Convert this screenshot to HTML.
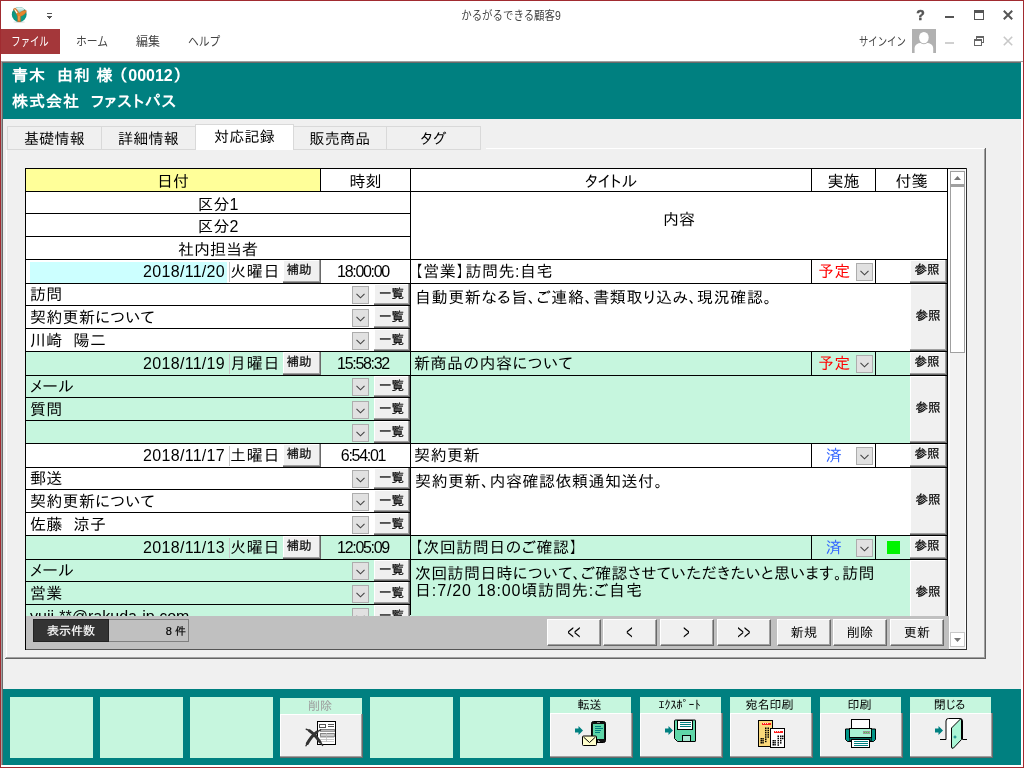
<!DOCTYPE html>
<html lang="ja"><head><meta charset="utf-8"><title>かるがるできる顧客9</title>
<style>
*{box-sizing:border-box}
html,body{margin:0;padding:0}
body{width:1024px;height:768px;position:relative;overflow:hidden;background:#f0f0f0;will-change:transform;
 font-family:"Liberation Sans","IPAPGothic","IPAGothic",sans-serif;font-size:16px;color:#000}
.abs,.abs>*{position:absolute}
.ui{font-family:"Liberation Sans","Noto Sans CJK JP",sans-serif}
.g{font-family:"Liberation Sans","IPAPGothic","IPAGothic",sans-serif}
.m{font-family:"Liberation Mono","IPAGothic",monospace}
#frame{left:0;top:0;width:1024px;height:768px;border:1px solid #a12b30;z-index:50;pointer-events:none}
#titlebar{left:1px;top:1px;width:1022px;height:60px;background:#fff}
#filetab{left:1px;top:29px;width:59px;height:25px;background:#a4373a;color:#fff;font-size:12px;line-height:27px;text-align:center}
#filetab span{display:inline-block;transform:scaleX(.78)}
.menu{top:30px;height:25px;line-height:25px;font-size:12px;color:#444;white-space:pre;transform-origin:0 50%;transform:scaleX(.9)}
#title{left:0;top:6px;width:1022px;text-align:center;font-size:12px;line-height:20px;color:#444;transform:scaleX(.87)}
#hl1{left:1px;top:61px;width:1022px;height:1px;background:#a0a0a0}
#hl2{left:1px;top:62px;width:1022px;height:1px;background:#6a6a6a}
#vl1{left:1px;top:62px;width:1px;height:704px;background:#a0a0a0}
#vl2{left:2px;top:62px;width:1px;height:704px;background:#696969}
#head{left:3px;top:63px;width:1018px;height:56px;background:#008080;color:#fff;font-size:16px}
#head div{left:9px;white-space:pre;line-height:20px;font-weight:bold;letter-spacing:1px}
.sp{display:inline-block;width:11px}
.tab{top:126px;height:24px;border:1px solid #d9d9d9;background:#f0f0f0;text-align:center;font-size:15px;line-height:23px;letter-spacing:.3px}
.tab.act{top:124px;height:26px;background:#fff;border-bottom:none;line-height:23px}
#pnl-top{left:486px;top:148px;width:498px;height:1px;background:#fff}
#pnl-r1{left:984px;top:149px;width:1px;height:509px;background:#a0a0a0}
#pnl-r2{left:985px;top:148px;width:1px;height:511px;background:#646464}
#pnl-b1{left:6px;top:657px;width:979px;height:1px;background:#a0a0a0}
#pnl-b2{left:5px;top:658px;width:981px;height:1px;background:#646464}
#pnl-l{left:6px;top:150px;width:1px;height:507px;background:#fff}
/* table */
#tbl{left:25px;top:168px;width:942px;height:482px;background:#fff;overflow:hidden}
.hl{height:1px;background:#000}
.vl{width:1px;background:#000}
.hc{text-align:center;font-size:16px;line-height:22px}
.rec{left:0;width:923px;height:92px}
.rec.gr{background:#c6f6de}
.rec>*{position:absolute}
.t{white-space:pre;line-height:22px;font-size:16px;letter-spacing:.3px}
.btn{background:#f0f0f0;border-right:1px solid #696969;border-bottom:1px solid #696969;box-shadow:inset -1px -1px 0 #a0a0a0, inset 1px 1px 0 #fff;text-align:center}
.sb{font-size:12.5px;-webkit-text-stroke:.2px #000}
.dd{width:17px;height:18px;background:#e1e1e1;border:1px solid #adadad}
.dd svg{position:absolute;left:3px;top:6px}
#foot{left:1px;top:448px;width:923px;height:34px;background:#c0c0c0;z-index:3}
.nb{top:3px;width:54px;height:27px;background:#f0f0f0;border:1px solid #fff;border-right-color:#696969;border-bottom-color:#696969;box-shadow:inset -1px -1px 0 #a0a0a0;text-align:center;font-size:13px;line-height:25px;letter-spacing:.3px}
/* bottom bar */
#bar{left:3px;top:689px;width:1018px;height:76px;background:#008080}
.cell{top:8px;width:83px;height:61px;background:#c6f6de}
.cell .lb{left:0;top:0;width:81px;height:16px;background:#c6f6de;text-align:center;font-size:12px;line-height:16px;padding-right:2px}
.cell .bb{left:0;top:16px;width:83px;height:45px;background:#f0f0f0;border-right:1px solid #696969;border-bottom:1px solid #696969;box-shadow:inset -1px -1px 0 #a0a0a0, inset 1px 1px 0 #fff}
.cell.has{background:transparent}
</style></head>
<body class="abs">
<div id="titlebar"></div>
<div id="title" class="ui">かるがるできる顧客9</div>
<svg style="left:11px;top:6px" width="17" height="17" viewBox="0 0 17 17"><defs><radialGradient id="gi" cx="50%" cy="60%" r="60%"><stop offset="0" stop-color="#12a890"/><stop offset="1" stop-color="#0a8c7a"/></radialGradient><linearGradient id="gh" x1="0" y1="0" x2="0" y2="1"><stop offset="0" stop-color="#ffffff"/><stop offset="1" stop-color="#4fb8ac"/></linearGradient></defs><ellipse cx="8.2" cy="16" rx="6" ry=".7" fill="#ddd"/><circle cx="8.2" cy="8.5" r="7.4" fill="url(#gi)"/><path d="M3.6 2.6 Q8.2 -0.3 12.8 2.6 L13.5 4 L8 8 Z" fill="url(#gh)"/><path d="M2.3 3 L4.3 2 C6 3.6 7.4 5.6 8.1 7.4 C9.6 5.6 12.2 4.4 15.1 4.2 L15.3 5.8 C14.2 8.2 11.6 9.8 9.7 10.3 L9.5 15.7 L6.7 15.7 L6.5 10.2 C5.8 8 3.8 5.2 2.3 3 Z" fill="#e8842c" stroke="#b4601c" stroke-width=".4"/><path d="M3.2 3.6 L5.6 7.4 L6.6 6.6 L4.2 3.4 Z" fill="#fff"/><path d="M7.6 10 L8.4 10 L8.3 14 L7.5 14 Z" fill="#f6b070"/></svg>
<svg style="left:47px;top:13px" width="5" height="6" viewBox="0 0 5 6" shape-rendering="crispEdges"><path d="M0 0 H5 V1 H0 Z M0 3 H5 V4 H4 V5 H3 V6 H2 V5 H1 V4 H0 Z" fill="#555"/></svg>
<div class="ui" style="left:915px;top:6px;width:11px;font-size:14px;font-weight:bold;color:#555;-webkit-text-stroke:.5px #555;line-height:18px;text-align:center">?</div>
<div style="left:945px;top:16px;width:9px;height:2px;background:#555"></div>
<div style="left:974px;top:10px;width:10px;height:10px;border:1px solid #555;border-top-width:3px"></div>
<svg style="left:1003px;top:10px" width="10" height="10" viewBox="0 0 10 10"><path d="M0.8 0.8 L9.2 9.2 M9.2 0.8 L0.8 9.2" stroke="#555" stroke-width="2"/></svg>
<div id="filetab" class="ui"><span>ファイル</span></div>
<div class="menu ui" style="left:76px">ホーム</div>
<div class="menu ui" style="left:136px;transform:none">編集</div>
<div class="menu ui" style="left:188px">ヘルプ</div>
<div class="menu ui" style="left:859px;transform:scaleX(.78)">サインイン</div>
<svg style="left:912px;top:29px" width="24" height="24" viewBox="0 0 24 24"><rect width="24" height="24" fill="#b1b1b1"/><path d="M2.6 24 V19.500 C2.600 15 6.500 13.800 11.900 13.800 C17.300 13.800 21.200 15 21.200 19.500 V24 Z" fill="#fff"/><ellipse cx="11.900" cy="8.600" rx="5.700" ry="6.600" fill="#b1b1b1"/><ellipse cx="11.900" cy="8.600" rx="4.800" ry="5.700" fill="#fff"/></svg>
<div style="left:945px;top:42px;width:9px;height:2px;background:#d0d0d0"></div>
<svg style="left:974px;top:36px" width="10" height="10" viewBox="0 0 10 10" shape-rendering="crispEdges"><path d="M2 0 H10 V7 H8 V6 H9 V2 H3 V3 H2 Z" fill="#666"/><path d="M0 3 H8 V10 H0 Z M1 5 V9 H7 V5 Z" fill="#666" fill-rule="evenodd"/></svg>
<svg style="left:1003px;top:36px" width="10" height="10" viewBox="0 0 10 10"><path d="M0.8 0.8 L9.2 9.2 M9.2 0.8 L0.8 9.2" stroke="#c8c8c8" stroke-width="1.6"/></svg>
<div id="hl1"></div><div id="hl2"></div><div id="vl1"></div><div id="vl2"></div>
<div id="head" class="abs g"><div style="top:3px">青木<span class="sp"></span>由利 様<span class="sp" style="width:5px"></span>（<span style="letter-spacing:0">00012</span><span style="display:inline-block;width:1px"></span>）</div><div style="top:29px">株式会社<span class="sp"></span>ファストパス</div></div>
<div class="tab" style="left:7px;width:95px">基礎情報</div>
<div class="tab" style="left:101px;width:95px">詳細情報</div>
<div class="tab act" style="left:195px;width:99px">対応記録</div>
<div class="tab" style="left:293px;width:94px">販売商品</div>
<div class="tab" style="left:386px;width:95px">タグ</div>
<div id="pnl-top"></div><div id="pnl-r1"></div><div id="pnl-r2"></div><div id="pnl-b1"></div><div id="pnl-b2"></div><div id="pnl-l"></div>
<div id="tbl" class="abs">
<div style="left:1px;top:1px;width:295px;height:22px;background:#ffff99"></div>
<div class="hc" style="left:1px;top:3px;width:294px">日付</div>
<div class="hc" style="left:296px;top:3px;width:89px">時刻</div>
<div class="hc" style="left:1px;top:26px;width:384px">区分1</div>
<div class="hc" style="left:1px;top:48px;width:384px">区分2</div>
<div class="hc" style="left:1px;top:71px;width:384px">社内担当者</div>
<div class="hc" style="left:386px;top:3px;width:400px">タイトル</div>
<div class="hc" style="left:787px;top:3px;width:63px">実施</div>
<div class="hc" style="left:851px;top:3px;width:71px">付箋</div>
<div class="hc" style="left:386px;top:41px;width:536px">内容</div>
<div class="rec" style="top:91px">
<div style="left:5px;top:3px;width:197px;height:21px;background:#ccffff"></div>
<div class="t" style="left:5px;top:2px;width:195px;text-align:right">2018/11/20</div>
<div style="left:204px;top:3px;width:1px;height:20px;background:#c8c8c8"></div>
<div class="t" style="left:205px;top:2px;letter-spacing:.8px">火曜日</div>
<div class="btn sb" style="left:258px;top:1px;width:38px;height:23px;line-height:21px;padding-right:5px">補助</div>
<div class="t" style="left:296px;top:2px;width:84px;text-align:center;letter-spacing:-1.3px">18:00:00</div>
<div class="t" style="left:389px;top:2px;letter-spacing:.5px">【営業】訪問先:自宅</div>
<div class="t" style="left:793px;top:2px;color:#ff0000;width:32px;text-align:center">予定</div>
<div class="dd" style="left:831px;top:4px"><svg width="9" height="6" viewBox="0 0 9 6"><path d="M0.5 0.8 L4.5 4.8 L8.5 0.8" fill="none" stroke="#444" stroke-width="1.1"/></svg></div>
<div class="btn sb" style="left:885px;top:1px;width:37px;height:23px;line-height:21px;padding-right:2px">参照</div>
<div class="t" style="left:5px;top:25px">訪問</div>
<div class="dd" style="left:327px;top:27px"><svg width="9" height="6" viewBox="0 0 9 6"><path d="M0.5 0.8 L4.5 4.8 L8.5 0.8" fill="none" stroke="#444" stroke-width="1.1"/></svg></div>
<div class="btn sb" style="left:349px;top:25px;width:36px;height:21px;line-height:21px">一覧</div>
<div class="t" style="left:5px;top:48px">契約更新について</div>
<div class="dd" style="left:327px;top:50px"><svg width="9" height="6" viewBox="0 0 9 6"><path d="M0.5 0.8 L4.5 4.8 L8.5 0.8" fill="none" stroke="#444" stroke-width="1.1"/></svg></div>
<div class="btn sb" style="left:349px;top:47px;width:36px;height:22px;line-height:22px">一覧</div>
<div class="t" style="left:5px;top:71px">川崎<span class="sp"></span>陽二</div>
<div class="dd" style="left:327px;top:73px"><svg width="9" height="6" viewBox="0 0 9 6"><path d="M0.5 0.8 L4.5 4.8 L8.5 0.8" fill="none" stroke="#444" stroke-width="1.1"/></svg></div>
<div class="btn sb" style="left:349px;top:70px;width:36px;height:22px;line-height:22px">一覧</div>
<div class="t" style="left:390px;top:30px;width:480px;white-space:normal;line-height:17px;letter-spacing:0.62px">自動更新なる旨、ご連絡、書類取り込み、現況確認。</div>
<div class="btn sb" style="left:885px;top:25px;width:37px;height:67px;line-height:64px">参照</div>
<div class="hl" style="left:0;top:0;width:923px"></div>
<div class="hl" style="left:0;top:24px;width:923px"></div>
<div class="hl" style="left:0;top:46px;width:386px"></div>
<div class="hl" style="left:0;top:69px;width:386px"></div>
<div class="vl" style="left:786px;top:0;height:24px"></div>
<div class="vl" style="left:850px;top:0;height:24px"></div>
</div>
<div class="rec gr" style="top:183px">
<div class="t" style="left:5px;top:2px;width:195px;text-align:right">2018/11/19</div>
<div style="left:204px;top:3px;width:1px;height:20px;background:#c8c8c8"></div>
<div class="t" style="left:205px;top:2px;letter-spacing:.8px">月曜日</div>
<div class="btn sb" style="left:258px;top:1px;width:38px;height:23px;line-height:21px;padding-right:5px">補助</div>
<div class="t" style="left:296px;top:2px;width:84px;text-align:center;letter-spacing:-1.3px">15:58:32</div>
<div class="t" style="left:389px;top:2px;letter-spacing:.5px">新商品の内容について</div>
<div class="t" style="left:793px;top:2px;color:#ff0000;width:32px;text-align:center">予定</div>
<div class="dd" style="left:831px;top:4px"><svg width="9" height="6" viewBox="0 0 9 6"><path d="M0.5 0.8 L4.5 4.8 L8.5 0.8" fill="none" stroke="#444" stroke-width="1.1"/></svg></div>
<div class="btn sb" style="left:885px;top:1px;width:37px;height:23px;line-height:21px;padding-right:2px">参照</div>
<div class="t" style="left:5px;top:25px">メール</div>
<div class="dd" style="left:327px;top:27px"><svg width="9" height="6" viewBox="0 0 9 6"><path d="M0.5 0.8 L4.5 4.8 L8.5 0.8" fill="none" stroke="#444" stroke-width="1.1"/></svg></div>
<div class="btn sb" style="left:349px;top:25px;width:36px;height:21px;line-height:21px">一覧</div>
<div class="t" style="left:5px;top:48px">質問</div>
<div class="dd" style="left:327px;top:50px"><svg width="9" height="6" viewBox="0 0 9 6"><path d="M0.5 0.8 L4.5 4.8 L8.5 0.8" fill="none" stroke="#444" stroke-width="1.1"/></svg></div>
<div class="btn sb" style="left:349px;top:47px;width:36px;height:22px;line-height:22px">一覧</div>
<div class="t" style="left:5px;top:71px"></div>
<div class="dd" style="left:327px;top:73px"><svg width="9" height="6" viewBox="0 0 9 6"><path d="M0.5 0.8 L4.5 4.8 L8.5 0.8" fill="none" stroke="#444" stroke-width="1.1"/></svg></div>
<div class="btn sb" style="left:349px;top:70px;width:36px;height:22px;line-height:22px">一覧</div>
<div class="t" style="left:390px;top:30px;width:480px;white-space:normal;line-height:17px;letter-spacing:0.3px"></div>
<div class="btn sb" style="left:885px;top:25px;width:37px;height:67px;line-height:64px">参照</div>
<div class="hl" style="left:0;top:0;width:923px"></div>
<div class="hl" style="left:0;top:24px;width:923px"></div>
<div class="hl" style="left:0;top:46px;width:386px"></div>
<div class="hl" style="left:0;top:69px;width:386px"></div>
<div class="vl" style="left:786px;top:0;height:24px"></div>
<div class="vl" style="left:850px;top:0;height:24px"></div>
</div>
<div class="rec" style="top:275px">
<div class="t" style="left:5px;top:2px;width:195px;text-align:right">2018/11/17</div>
<div style="left:204px;top:3px;width:1px;height:20px;background:#c8c8c8"></div>
<div class="t" style="left:205px;top:2px;letter-spacing:.8px">土曜日</div>
<div class="btn sb" style="left:258px;top:1px;width:38px;height:23px;line-height:21px;padding-right:5px">補助</div>
<div class="t" style="left:296px;top:2px;width:84px;text-align:center;letter-spacing:-1.3px">6:54:01</div>
<div class="t" style="left:389px;top:2px;letter-spacing:.5px">契約更新</div>
<div class="t" style="left:793px;top:2px;color:#3366ff;width:32px;text-align:center">済</div>
<div class="dd" style="left:831px;top:4px"><svg width="9" height="6" viewBox="0 0 9 6"><path d="M0.5 0.8 L4.5 4.8 L8.5 0.8" fill="none" stroke="#444" stroke-width="1.1"/></svg></div>
<div class="btn sb" style="left:885px;top:1px;width:37px;height:23px;line-height:21px;padding-right:2px">参照</div>
<div class="t" style="left:5px;top:25px">郵送</div>
<div class="dd" style="left:327px;top:27px"><svg width="9" height="6" viewBox="0 0 9 6"><path d="M0.5 0.8 L4.5 4.8 L8.5 0.8" fill="none" stroke="#444" stroke-width="1.1"/></svg></div>
<div class="btn sb" style="left:349px;top:25px;width:36px;height:21px;line-height:21px">一覧</div>
<div class="t" style="left:5px;top:48px">契約更新について</div>
<div class="dd" style="left:327px;top:50px"><svg width="9" height="6" viewBox="0 0 9 6"><path d="M0.5 0.8 L4.5 4.8 L8.5 0.8" fill="none" stroke="#444" stroke-width="1.1"/></svg></div>
<div class="btn sb" style="left:349px;top:47px;width:36px;height:22px;line-height:22px">一覧</div>
<div class="t" style="left:5px;top:71px">佐藤<span class="sp"></span>涼子</div>
<div class="dd" style="left:327px;top:73px"><svg width="9" height="6" viewBox="0 0 9 6"><path d="M0.5 0.8 L4.5 4.8 L8.5 0.8" fill="none" stroke="#444" stroke-width="1.1"/></svg></div>
<div class="btn sb" style="left:349px;top:70px;width:36px;height:22px;line-height:22px">一覧</div>
<div class="t" style="left:390px;top:30px;width:480px;white-space:normal;line-height:17px;letter-spacing:0.5px">契約更新、内容確認依頼通知送付。</div>
<div class="btn sb" style="left:885px;top:25px;width:37px;height:67px;line-height:64px">参照</div>
<div class="hl" style="left:0;top:0;width:923px"></div>
<div class="hl" style="left:0;top:24px;width:923px"></div>
<div class="hl" style="left:0;top:46px;width:386px"></div>
<div class="hl" style="left:0;top:69px;width:386px"></div>
<div class="vl" style="left:786px;top:0;height:24px"></div>
<div class="vl" style="left:850px;top:0;height:24px"></div>
</div>
<div class="rec gr" style="top:367px">
<div class="t" style="left:5px;top:2px;width:195px;text-align:right">2018/11/13</div>
<div style="left:204px;top:3px;width:1px;height:20px;background:#c8c8c8"></div>
<div class="t" style="left:205px;top:2px;letter-spacing:.8px">火曜日</div>
<div class="btn sb" style="left:258px;top:1px;width:38px;height:23px;line-height:21px;padding-right:5px">補助</div>
<div class="t" style="left:296px;top:2px;width:84px;text-align:center;letter-spacing:-1.3px">12:05:09</div>
<div class="t" style="left:389px;top:2px;letter-spacing:.5px">【次回訪問日のご確認】</div>
<div class="t" style="left:793px;top:2px;color:#3366ff;width:32px;text-align:center">済</div>
<div class="dd" style="left:831px;top:4px"><svg width="9" height="6" viewBox="0 0 9 6"><path d="M0.5 0.8 L4.5 4.8 L8.5 0.8" fill="none" stroke="#444" stroke-width="1.1"/></svg></div>
<div style="left:862px;top:6px;width:13px;height:13px;background:#00f400"></div>
<div class="btn sb" style="left:885px;top:1px;width:37px;height:23px;line-height:21px;padding-right:2px">参照</div>
<div class="t" style="left:5px;top:25px">メール</div>
<div class="dd" style="left:327px;top:27px"><svg width="9" height="6" viewBox="0 0 9 6"><path d="M0.5 0.8 L4.5 4.8 L8.5 0.8" fill="none" stroke="#444" stroke-width="1.1"/></svg></div>
<div class="btn sb" style="left:349px;top:25px;width:36px;height:21px;line-height:21px">一覧</div>
<div class="t" style="left:5px;top:48px">営業</div>
<div class="dd" style="left:327px;top:50px"><svg width="9" height="6" viewBox="0 0 9 6"><path d="M0.5 0.8 L4.5 4.8 L8.5 0.8" fill="none" stroke="#444" stroke-width="1.1"/></svg></div>
<div class="btn sb" style="left:349px;top:47px;width:36px;height:22px;line-height:22px">一覧</div>
<div class="t" style="left:5px;top:71px"><span style="letter-spacing:0">yuji-**@rakuda-jp.com</span></div>
<div class="dd" style="left:327px;top:73px"><svg width="9" height="6" viewBox="0 0 9 6"><path d="M0.5 0.8 L4.5 4.8 L8.5 0.8" fill="none" stroke="#444" stroke-width="1.1"/></svg></div>
<div class="btn sb" style="left:349px;top:70px;width:36px;height:22px;line-height:22px">一覧</div>
<div class="t" style="left:390px;top:30px;width:480px;white-space:normal;line-height:17px;letter-spacing:0.3px">次回訪問日時について、ご確認させていただきたいと思います。訪問<br><span style="letter-spacing:.85px">日:7/20 18:00頃訪問先:ご自宅</span></div>
<div class="btn sb" style="left:885px;top:25px;width:37px;height:67px;line-height:64px">参照</div>
<div class="hl" style="left:0;top:0;width:923px"></div>
<div class="hl" style="left:0;top:24px;width:923px"></div>
<div class="hl" style="left:0;top:46px;width:386px"></div>
<div class="hl" style="left:0;top:69px;width:386px"></div>
<div class="vl" style="left:786px;top:0;height:24px"></div>
<div class="vl" style="left:850px;top:0;height:24px"></div>
</div>
<div class="hl" style="left:0;top:0;width:942px"></div>
<div class="hl" style="left:0;top:23px;width:923px"></div>
<div class="hl" style="left:0;top:45px;width:386px"></div>
<div class="hl" style="left:0;top:68px;width:386px"></div>
<div class="vl" style="left:295px;top:0;height:23px"></div>
<div class="vl" style="left:786px;top:0;height:23px"></div>
<div class="vl" style="left:850px;top:0;height:23px"></div>
<div class="vl" style="left:0;top:0;height:482px"></div>
<div class="vl" style="left:385px;top:0;height:447px"></div>
<div class="vl" style="left:922px;top:0;height:448px"></div>
<div class="vl" style="left:941px;top:0;height:482px;background:#333"></div>
<div class="hl" style="left:922px;top:481px;width:20px;background:#333"></div>
<div style="left:923px;top:1px;width:18px;height:480px;background:#f2f2f2;border-left:2px solid #fff;border-right:1px solid #fff"></div>
<div style="left:925px;top:3px;width:15px;height:15px;background:#fff;border:1px solid #a0a0a0;border-bottom-width:2px"></div>
<svg style="left:929px;top:8px" width="7" height="4" viewBox="0 0 7 4"><path d="M0 4 L3.5 0 L7 4 Z" fill="#777"/></svg>
<div style="left:925px;top:18px;width:15px;height:167px;background:#fff;border:1px solid #a0a0a0"></div>
<div style="left:925px;top:464px;width:15px;height:15px;background:#fff;border:1px solid #c8c8c8"></div>
<svg style="left:929px;top:470px" width="7" height="4" viewBox="0 0 7 4"><path d="M0 0 L3.5 4 L7 0 Z" fill="#777"/></svg>
<div id="foot" class="abs">
<div style="left:7px;top:3px;width:76px;height:23px;background:#333;color:#fff;font-size:12px;-webkit-text-stroke:.2px #fff;text-align:center;line-height:22px;border:1px solid #222">表示件数</div>
<div style="left:83px;top:3px;width:80px;height:23px;border:1px solid #808080;border-left:none;font-size:11px;-webkit-text-stroke:.2px #000;text-align:right;padding-right:2px;line-height:22px;white-space:pre">8 件</div>
<div class="nb" style="left:521px"><span style="display:inline-block;font-size:15px;transform:translateY(-1px) scale(.72,1.3)">&lt;&lt;</span></div>
<div class="nb" style="left:577px"><span style="display:inline-block;font-size:15px;transform:translateY(-1px) scale(.72,1.3)">&lt;</span></div>
<div class="nb" style="left:634px"><span style="display:inline-block;font-size:15px;transform:translateY(-1px) scale(.72,1.3)">&gt;</span></div>
<div class="nb" style="left:691px"><span style="display:inline-block;font-size:15px;transform:translateY(-1px) scale(.72,1.3)">&gt;&gt;</span></div>
<div class="nb" style="left:751px">新規</div>
<div class="nb" style="left:807px">削除</div>
<div class="nb" style="left:864px">更新</div>
<div style="left:0;top:33px;width:923px;height:1px;background:#555"></div>
</div>
</div>
<div id="bar" class="abs">
<div class="cell" style="left:7px"></div>
<div class="cell" style="left:97px"></div>
<div class="cell" style="left:187px"></div>
<div class="cell has abs" style="left:277px"><div class="lb" style="color:#9c9c9c;top:1px;width:82px">削除</div><div class="bb" style="top:17px;height:44px"><svg style="left:0;top:0;margin-top:-1px" width="83" height="45" viewBox="0 0 83 45" shape-rendering="crispEdges"><rect x="37.5" y="8.5" width="18" height="23" fill="#fff" stroke="#000"/><rect x="37" y="26" width="20" height="7" fill="none"/><rect x="39.500" y="11.5" width="6" height="3" fill="#fff" stroke="#555"/><path d="M48 11.5 H54 M48 13.5 H54" stroke="#555"/><rect x="40" y="16" width="14" height="2" fill="#bbb" stroke="#555" stroke-width=".6"/><rect x="40" y="20" width="14" height="3" fill="#ccc" stroke="#555" stroke-width=".6"/><path d="M40 24.5 H54 M40 26.5 H54 M40 28.5 H54 M46 20 V29" stroke="#bbb" stroke-width=".8"/><g fill="none" stroke="#333" stroke-linecap="round" shape-rendering="auto"><path d="M26.2 16.2 C31 17 36 21.5 42.6 32.4 M40.6 16.8 C34 19.5 29 25.5 26 32.8" stroke-width="1.4"/><path d="M29.5 17.8 C33 20 36.5 24 40 29 M36.8 19.2 C32.5 22.2 29.8 26 27.3 30.5" stroke-width="3"/></g></svg></div></div>
<div class="cell" style="left:367px"></div>
<div class="cell" style="left:457px"></div>
<div class="cell has abs" style="left:547px"><div class="lb" style="color:#000">転送</div><div class="bb"><svg style="left:0;top:0" width="83" height="45" viewBox="0 0 83 45" shape-rendering="crispEdges"><path d="M25 15.5 H28.5 V13 L33 17.5 L28.5 22 V19.5 H25 Z" fill="#008080" shape-rendering="auto"/><rect x="41.5" y="8.500" width="14" height="21" rx="2" fill="#111" stroke="#000" shape-rendering="auto"/><rect x="43" y="11" width="11" height="15" fill="#5fd6a8"/><path d="M47 9.5 H50" stroke="#888"/><path d="M44.500 13.5 H50.5 M44.500 15.5 H52.5 M44.500 17.5 H50.5 M44.500 19.5 H49.5" stroke="#008080"/><path d="M47.500 28 H50 M48.500 27 V29" stroke="#aaa" stroke-width=".8"/><rect x="32.500" y="23" width="14" height="9.5" rx="1" fill="#ffffcc" stroke="#000" shape-rendering="auto"/><path d="M33.500 24 L39.5 29.5 L45.500 24" fill="none" stroke="#000" stroke-width="1" shape-rendering="auto"/></svg></div></div>
<div class="cell has abs" style="left:637px"><div class="lb" style="color:#000">ｴｸｽﾎﾟｰﾄ</div><div class="bb"><svg style="left:0;top:0" width="83" height="45" viewBox="0 0 83 45" shape-rendering="crispEdges"><path d="M25 15.5 H28.5 V13 L33 17.5 L28.5 22 V19.5 H25 Z" fill="#008080" shape-rendering="auto"/><path d="M35.500 7 H55 Q55.500 7 55.500 7.500 V28 Q55.500 28.500 55 28.500 H37.5 L34.500 25.500 V8 Q34.500 7 35.500 7 Z" fill="#5fd6a8" stroke="#000" shape-rendering="auto"/><rect x="37.500" y="7.500" width="15" height="9" fill="#fff" stroke="#000"/><path d="M39.500 9.500 H50.5 M39.500 11.500 H50.5 M39.500 13.500 H50.5" stroke="#008080"/><rect x="42.500" y="22.500" width="8" height="6" fill="#a8e6d0" stroke="#000"/></svg></div></div>
<div class="cell has abs" style="left:727px"><div class="lb" style="color:#000">宛名印刷</div><div class="bb"><svg style="left:0;top:0" width="83" height="45" viewBox="0 0 83 45" shape-rendering="crispEdges"><rect x="28.500" y="7.500" width="14" height="26" fill="#fbd97a" stroke="#000"/><rect x="32" y="9.500" width="9" height="2.500" fill="#ff2020"/><path d="M33 10.500 H34 M35 10.500 H36 M37 10.500 H38" stroke="#fff" stroke-width=".8"/><rect x="35" y="14.5" width="1.5" height="1.5" fill="#000" shape-rendering="auto"/><rect x="35" y="16.7" width="1.5" height="1.5" fill="#000" shape-rendering="auto"/><rect x="35" y="18.9" width="1.5" height="1.5" fill="#000" shape-rendering="auto"/><rect x="35" y="21.1" width="1.5" height="1.5" fill="#000" shape-rendering="auto"/><rect x="35" y="23.3" width="1.5" height="1.5" fill="#000" shape-rendering="auto"/><rect x="35" y="25.5" width="1.5" height="1.5" fill="#000" shape-rendering="auto"/><rect x="35" y="27.700000000000003" width="1.5" height="1.5" fill="#000" shape-rendering="auto"/><rect x="37.5" y="14.5" width="1.5" height="1.5" fill="#000" shape-rendering="auto"/><rect x="37.5" y="16.7" width="1.5" height="1.5" fill="#000" shape-rendering="auto"/><rect x="37.5" y="18.9" width="1.5" height="1.5" fill="#000" shape-rendering="auto"/><rect x="37.5" y="21.1" width="1.5" height="1.5" fill="#000" shape-rendering="auto"/><rect x="37.5" y="23.3" width="1.5" height="1.5" fill="#000" shape-rendering="auto"/><rect x="30.5" y="25" width="1.5" height="1.5" fill="#000" shape-rendering="auto"/><rect x="32.3" y="25" width="1.5" height="1.5" fill="#000" shape-rendering="auto"/><rect x="30.5" y="27" width="1.5" height="1.5" fill="#000" shape-rendering="auto"/><rect x="32.3" y="27" width="1.5" height="1.5" fill="#000" shape-rendering="auto"/><rect x="30.5" y="29" width="1.5" height="1.5" fill="#000" shape-rendering="auto"/><rect x="32.3" y="29" width="1.5" height="1.5" fill="#000" shape-rendering="auto"/><rect x="40.500" y="15.500" width="14" height="19" fill="#fff" stroke="#000"/><rect x="44" y="17.500" width="9" height="2.500" fill="#ff2020"/><path d="M45 18.500 H46 M47 18.500 H48 M49 18.500 H50" stroke="#fff" stroke-width=".8"/><rect x="47.5" y="22.5" width="1.5" height="1.5" fill="#000" shape-rendering="auto"/><rect x="47.5" y="24.7" width="1.5" height="1.5" fill="#000" shape-rendering="auto"/><rect x="47.5" y="26.9" width="1.5" height="1.5" fill="#000" shape-rendering="auto"/><rect x="47.5" y="29.1" width="1.5" height="1.5" fill="#000" shape-rendering="auto"/><rect x="47.5" y="31.3" width="1.5" height="1.5" fill="#000" shape-rendering="auto"/><rect x="50" y="22.5" width="1.5" height="1.5" fill="#000" shape-rendering="auto"/><rect x="50" y="24.7" width="1.5" height="1.5" fill="#000" shape-rendering="auto"/><rect x="50" y="26.9" width="1.5" height="1.5" fill="#000" shape-rendering="auto"/><rect x="50" y="29.1" width="1.5" height="1.5" fill="#000" shape-rendering="auto"/><rect x="52" y="22.5" width="1.5" height="1.5" fill="#000" shape-rendering="auto"/><rect x="52" y="24.7" width="1.5" height="1.5" fill="#000" shape-rendering="auto"/><rect x="42.5" y="27" width="1.5" height="1.5" fill="#000" shape-rendering="auto"/><rect x="44.3" y="27" width="1.5" height="1.5" fill="#000" shape-rendering="auto"/><rect x="42.5" y="29" width="1.5" height="1.5" fill="#000" shape-rendering="auto"/><rect x="44.3" y="29" width="1.5" height="1.5" fill="#000" shape-rendering="auto"/><rect x="42.5" y="31" width="1.5" height="1.5" fill="#000" shape-rendering="auto"/><rect x="44.3" y="31" width="1.5" height="1.5" fill="#000" shape-rendering="auto"/></svg></div></div>
<div class="cell has abs" style="left:817px"><div class="lb" style="color:#000">印刷</div><div class="bb"><svg style="left:0;top:0" width="83" height="45" viewBox="0 0 83 45" shape-rendering="crispEdges"><rect x="31.500" y="6.500" width="18" height="10" fill="#fff" stroke="#000"/><path d="M25.500 16 H55.500 V26.500 L53.500 28.500 H27.500 L25.500 26.500 Z" fill="#009688" stroke="#000" shape-rendering="auto"/><rect x="29.500" y="15.500" width="22" height="9" fill="#aaf5d5" stroke="#000"/><rect x="43" y="18" width="7" height="3" fill="#9a9a9a"/><path d="M44 19.500 H45 M46 19.500 H47 M48 19.500 H49" stroke="#3ddc3d"/><rect x="29.500" y="24.500" width="22" height="2.500" fill="#00695c" stroke="#000" stroke-width=".6"/><rect x="31.500" y="26.500" width="18" height="8" fill="#fff" stroke="#000"/><path d="M33.500 28.500 H47.500 M33.500 30.500 H47.500 M33.500 32.500 H47.500" stroke="#008080"/></svg></div></div>
<div class="cell has abs" style="left:907px"><div class="lb" style="color:#000">閉じる</div><div class="bb"><svg style="left:0;top:0" width="83" height="45" viewBox="0 0 83 45" shape-rendering="crispEdges"><path d="M25 15.5 H28.5 V13 L33 17.5 L28.5 22 V19.5 H25 Z" fill="#008080" shape-rendering="auto"/><g shape-rendering="auto"><path d="M36 26.500 V8 Q36 5.500 38.500 5.500 H50 Q52.500 5.500 52.500 8 V26.500" fill="#fff" stroke="#000" stroke-width="1"/><path d="M30 26.500 H36 M52.500 26.500 H57" stroke="#000" stroke-width="1"/><path d="M41.500 15 L50.500 6 Q51.500 5.500 51.500 7 V26.500 L43.500 35 Q41.500 36 41.500 34 Z" fill="#aaf5d5" stroke="#000" stroke-width="1"/><path d="M43.500 24 H46.500 M45 22.500 V25.500" stroke="#008080" stroke-width="1"/></g></svg></div></div>
</div>
<div id="wb1" style="left:1021px;top:62px;width:2px;height:705px;background:#fff"></div>
<div id="wb2" style="left:1px;top:765px;width:1022px;height:2px;background:#fff"></div>
<div id="frame"></div>
</body></html>
